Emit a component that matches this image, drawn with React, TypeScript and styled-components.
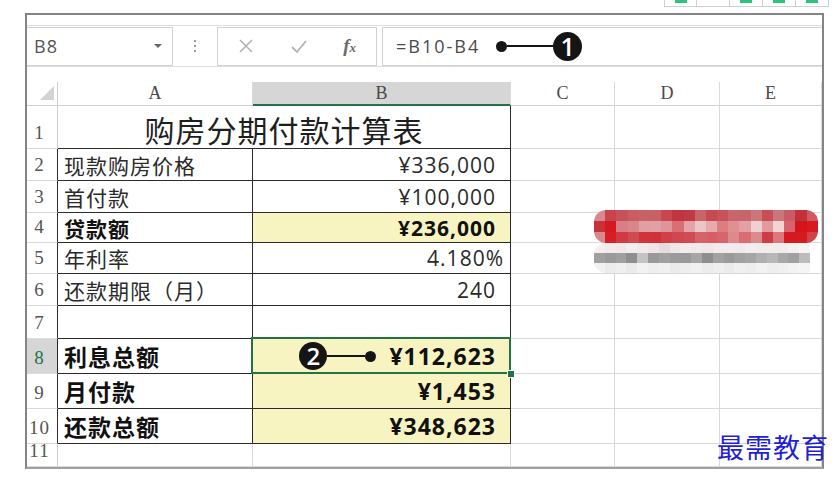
import React from "react";
import styled, { createGlobalStyle, css } from "styled-components";

const GlobalStyle = createGlobalStyle`
  html, body { margin: 0; padding: 0; background: #fff; }
  body { font-family: "Noto Sans CJK SC", "Noto Sans", sans-serif; color: #222; }
  * { box-sizing: border-box; }
`;

const GREEN = "#217346";
const DARK = "#2a2a2a";
const GRID = "#d9d9d9";
const YELLOW = "#f8f4c2";

const Page = styled.div`
  position: relative;
  width: 839px;
  height: 481px;
  overflow: hidden;
  background: #fff;
`;

const TopStrip = styled.div`
  display: flex;
  justify-content: flex-end;
  padding-right: 10px;
  height: 7px;
`;

const StripCell = styled.div<{ $mark?: boolean }>`
  position: relative;
  width: 33px;
  height: 7px;
  border-right: 1px solid #cfcfcf;
  border-bottom: 1px solid #cfcfcf;
  &:first-child { border-left: 1px solid #cfcfcf; }
  ${(p) =>
    p.$mark &&
    css`
      &::after {
        content: "";
        position: absolute;
        left: 10px;
        top: 0;
        width: 12px;
        height: 3px;
        background: #2ec27e;
      }
    `}
`;

const Frame = styled.div`
  margin: 6px 0 0 25px;
  width: 799px;
  border: 2px solid #858585;
  border-bottom-color: #a0a0a0;
  background: #fff;
`;

const FormulaBar = styled.div`
  margin-top: 10px;
  height: 42px;
  display: flex;
  align-items: center;
  border-top: 1px solid #dedede;
  border-bottom: 1px solid #dedede;
`;

const NameBox = styled.div`
  width: 146px;
  height: 39px;
  display: flex;
  align-items: center;
  justify-content: space-between;
  padding: 0 10px 0 7px;
  border: 1px solid #d2d2d2;
  border-left: none;
  font-family: "Open Sans", "Liberation Sans", sans-serif;
  font-size: 18px;
  letter-spacing: 1px;
  color: #555;
`;

const DropArrow = styled.span`
  width: 0;
  height: 0;
  border-left: 4px solid transparent;
  border-right: 4px solid transparent;
  border-top: 4px solid #666;
`;

const Grip = styled.div`
  margin: 0 21px 0 21px;
  display: flex;
  flex-direction: column;
  gap: 3px;
  span {
    width: 2px;
    height: 2px;
    background: #9a9a9a;
  }
`;

const FxBox = styled.div`
  width: 160px;
  height: 39px;
  display: flex;
  align-items: center;
  justify-content: space-between;
  padding: 0 20px 0 20px;
  border: 1px solid #d2d2d2;
  color: #b5b5b5;
`;

const FxLabel = styled.span`
  font-family: "Liberation Serif", serif;
  font-style: italic;
  font-weight: 700;
  font-size: 19px;
  color: #6a6a6a;
  small { font-size: 13px; }
`;

const FormulaInput = styled.div`
  margin-left: 5px;
  flex: 1;
  height: 39px;
  display: flex;
  align-items: center;
  padding-left: 13px;
  border: 1px solid #d2d2d2;
  border-right: none;
  font-family: "Open Sans", "Liberation Sans", sans-serif;
  font-size: 18px;
  letter-spacing: 2px;
  color: #4a4a4a;
`;

const Callout = styled.div<{ $gap: number }>`
  display: flex;
  align-items: center;
  letter-spacing: 0;
  margin-left: ${(p) => p.$gap}px;
  margin-right: ${(p) => (p.$gap === 0 ? 13 : 0)}px;
`;

const Badge = styled.div<{ $size: number }>`
  width: ${(p) => p.$size}px;
  height: ${(p) => p.$size}px;
  border-radius: 50%;
  background: #151515;
  color: #fff;
  display: flex;
  align-items: center;
  justify-content: center;
  font-family: "Open Sans", "Liberation Sans", sans-serif;
  font-size: ${(p) => p.$size - 4}px;
  font-weight: 600;
  line-height: 1;
`;

const Leader = styled.div<{ $w: number }>`
  width: ${(p) => p.$w}px;
  height: 2px;
  background: #151515;
`;

const Dot = styled.div`
  width: 11px;
  height: 11px;
  border-radius: 50%;
  background: #151515;
`;

const Sheet = styled.div<{ $rows: string }>`
  margin-top: 15px;
  display: grid;
  grid-template-columns: 31px 195px 258px 104px 105px 1fr;
  grid-template-rows: ${(p) => p.$rows};
`;

const Corner = styled.div`
  position: relative;
  border-right: 1px solid #cfcfcf;
  border-bottom: 1px solid #cfcfcf;
  &::after {
    content: "";
    position: absolute;
    right: 3px;
    bottom: 5px;
    width: 0;
    height: 0;
    border-left: 14px solid transparent;
    border-bottom: 14px solid #d3d3d3;
  }
`;

const ColHead = styled.div<{ $active?: boolean }>`
  display: flex;
  align-items: center;
  justify-content: center;
  font-family: "Liberation Serif", serif;
  font-size: 18px;
  color: #4a4a4a;
  border-right: 1px solid #dadada;
  border-bottom: 1px solid #cfcfcf;
  ${(p) =>
    p.$active &&
    css`
      background: #d6d6d6;
      border-bottom: 2px solid ${GREEN};
    `}
`;

const RowHead = styled.div<{ $active?: boolean; $edge?: boolean }>`
  display: flex;
  align-items: flex-end;
  justify-content: center;
  padding: 0 5px 3px 0;
  font-family: "Liberation Serif", serif;
  font-size: 19px;
  letter-spacing: 1px;
  line-height: 1.2;
  color: #555;
  border-right: 1px solid ${(p) => (p.$edge ? DARK : "#cfcfcf")};
  border-bottom: 1px solid #dadada;
  ${(p) =>
    p.$active &&
    css`
      background: #d6d6d6;
      color: ${GREEN};
    `}
`;

const Cell = styled.div<{
  $fill?: boolean;
  $darkR?: boolean;
  $darkB?: boolean;
  $right?: boolean;
  $bold?: boolean;
  $size?: number;
  $pad?: number;
  $selected?: boolean;
  $span?: number;
}>`
  position: relative;
  display: flex;
  align-items: center;
  justify-content: ${(p) => (p.$right ? "flex-end" : "flex-start")};
  padding: ${(p) => (p.$right ? `0 ${p.$pad ?? 14}px 0 0` : "0 0 0 6px")};
  grid-column: span ${(p) => p.$span ?? 1};
  background: ${(p) => (p.$fill ? YELLOW : "#fff")};
  border-right: 1px solid ${(p) => (p.$darkR ? DARK : GRID)};
  border-bottom: 1px solid ${(p) => (p.$darkB ? DARK : GRID)};
  font-family: ${(p) =>
    p.$right
      ? `"Open Sans", "Noto Sans CJK SC", sans-serif`
      : `"Noto Sans CJK SC", sans-serif`};
  font-size: ${(p) => p.$size ?? 21}px;
  letter-spacing: 1px;
  font-weight: ${(p) => (p.$bold ? 700 : 400)};
  color: ${(p) => (p.$bold ? "#111" : "#2a2a2a")};
  white-space: nowrap;
  ${(p) =>
    p.$selected &&
    css`
      &::after {
        content: "";
        position: absolute;
        inset: -2px -1px -1px -2px;
        border: 2px solid ${GREEN};
        pointer-events: none;
      }
    `}
`;

const Title = styled(Cell)`
  justify-content: center;
  padding: 4px 0 0 0;
  font-size: 30px;
  letter-spacing: 1px;
  color: #1e1e1e;
`;

const Handle = styled.div`
  position: absolute;
  right: -5px;
  bottom: -5px;
  width: 8px;
  height: 8px;
  background: ${GREEN};
  border: 1px solid #fff;
  z-index: 2;
`;

const Mosaic = styled.div`
  position: absolute;
  left: 594px;
  top: 210px;
  display: flex;
  flex-direction: column;
`;

const MosaicBand = styled.div<{ $cols: number; $w: number; $rowH: number }>`
  display: grid;
  grid-template-columns: repeat(${(p) => p.$cols}, ${(p) => p.$w}px);
  grid-auto-rows: ${(p) => p.$rowH}px;
  border-radius: 12px;
  overflow: hidden;
`;

const Tile = styled.div<{ $c: string }>`
  background: ${(p) => p.$c};
`;

const Watermark = styled.div`
  position: absolute;
  right: 10px;
  top: 431px;
  font-family: "Noto Sans CJK SC", serif;
  font-size: 27px;
  letter-spacing: 1px;
  color: #1f1fd6;
  line-height: 1.2;
`;

const redTiles = [
  ["#d9888e", "#c9434c", "#c85058", "#cc5c63", "#cc6067", "#c96068", "#c84650", "#c1363e", "#bf3a42", "#c8646a", "#c84951", "#c8525a", "#c9656c", "#c9646a", "#cc767b", "#c84f57", "#cb767b", "#c95b62", "#c0313b", "#cd585e"],
  ["#c93139", "#d41a20", "#d97e84", "#d98589", "#e0a0a3", "#e0a1a5", "#e09398", "#d86f75", "#e2a4a7", "#ecc5c7", "#e7abae", "#dc7d82", "#e08f93", "#e39fa2", "#f0cfd0", "#e4999c", "#f2d4d5", "#d9636a", "#d3141b", "#d71a20"],
  ["#d9888e", "#d41f26", "#d03a41", "#d04a51", "#d0343b", "#d03239", "#d04048", "#d0474f", "#d04c53", "#d6626a", "#d65e64", "#d7656c", "#dd8a8e", "#d96d73", "#dd8a8e", "#cf3d44", "#db787e", "#d61920", "#d51a20", "#d24148"],
];

const grayTiles = [
  ["#f4eeee", "#f3eaeb", "#f2e8e9", "#f4eced", "#f2e9ea", "#f0e4e5", "#e6dcdd", "#f0e6e7", "#f4eced", "#f2e9ea", "#efe6e6", "#f3eaeb", "#f3ebec", "#f1e9ea", "#f4eded", "#f2eaeb", "#f3eced", "#f2ebeb", "#f4f0f0", "#f7f4f4"],
  ["#a0a0a0", "#9a9a9a", "#9f9f9f", "#8e8e8e", "#c4c4c4", "#999999", "#a0a0a0", "#9c9c9c", "#9a9a9a", "#a6a6a6", "#8e8e8e", "#a2a2a2", "#9a9a9a", "#a1a1a1", "#a5a5a5", "#b0b0b0", "#b7b7b7", "#a8a8a8", "#a0a0a0", "#bcbcbc"],
  ["#f1f1f1", "#ececec", "#efefef", "#eaeaea", "#f2f2f2", "#eeeeee", "#f0f0f0", "#ebebeb", "#eeeeee", "#f1f1f1", "#ececec", "#efefef", "#ebebeb", "#f0f0f0", "#eeeeee", "#f2f2f2", "#eeeeee", "#f0f0f0", "#f3f3f3", "#f5f5f5"],
];

type Row = {
  n: number;
  h: number;
  label?: string;
  value?: string;
  bold?: boolean;
  fill?: boolean;
  size?: number;
  pad?: number;
};

const rows: Row[] = [
  { n: 1, h: 43 },
  { n: 2, h: 32, label: "现款购房价格", value: "¥336,000" },
  { n: 3, h: 32, label: "首付款", value: "¥100,000" },
  { n: 4, h: 30, label: "贷款额", value: "¥236,000", bold: true, fill: true },
  { n: 5, h: 31, label: "年利率", value: "4.180%", pad: 6 },
  { n: 6, h: 32, label: "还款期限（月）", value: "240" },
  { n: 7, h: 33 },
  { n: 8, h: 35, label: "利息总额", value: "¥112,623", bold: true, fill: true, size: 23 },
  { n: 9, h: 35, label: "月付款", value: "¥1,453", bold: true, fill: true, size: 23 },
  { n: 10, h: 35, label: "还款总额", value: "¥348,623", bold: true, fill: true, size: 23 },
  { n: 11, h: 23 },
];

const columns = ["A", "B", "C", "D", "E"];

export default function App() {
  const template = ["24px", ...rows.map((r) => `${r.h}px`)].join(" ");

  return (
    <Page>
      <GlobalStyle />
      <TopStrip>
        <StripCell $mark />
        <StripCell />
        <StripCell $mark />
        <StripCell $mark />
        <StripCell $mark />
      </TopStrip>

      <Frame>
        <FormulaBar>
          <NameBox>
            B8
            <DropArrow />
          </NameBox>
          <Grip>
            <span />
            <span />
            <span />
          </Grip>
          <FxBox>
            <svg width="16" height="16" viewBox="0 0 16 16">
              <path d="M2 2L14 14M14 2L2 14" stroke="#b3b3b3" strokeWidth="1.6" fill="none" />
            </svg>
            <svg width="18" height="16" viewBox="0 0 18 16">
              <path d="M2 9L7 14L16 3" stroke="#b3b3b3" strokeWidth="1.8" fill="none" />
            </svg>
            <FxLabel>
              f<small>x</small>
            </FxLabel>
          </FxBox>
          <FormulaInput>
            =B10-B4
            <Callout $gap={16}>
              <Dot />
              <Leader $w={46} />
              <Badge $size={29}>1</Badge>
            </Callout>
          </FormulaInput>
        </FormulaBar>

        <Sheet $rows={template}>
          <Corner />
          {columns.map((c) => (
            <ColHead key={c} $active={c === "B"}>
              {c}
            </ColHead>
          ))}

          {rows.map((r) => {
            const edge = r.n >= 2 && r.n <= 10;
            const darkB = r.n === 1 || edge;
            return (
              <React.Fragment key={r.n}>
                <RowHead $active={r.n === 8} $edge={edge}>
                  {r.n}
                </RowHead>
                {r.n === 1 ? (
                  <Title $span={2} $darkB $darkR>
                    购房分期付款计算表
                  </Title>
                ) : (
                  <>
                    <Cell $darkR={edge} $darkB={darkB} $bold={r.bold} $size={r.size}>
                      {r.label}
                    </Cell>
                    <Cell
                      $right
                      $darkR={edge}
                      $darkB={darkB}
                      $bold={r.bold}
                      $fill={r.fill}
                      $size={r.size}
                      $pad={r.pad}
                      $selected={r.n === 8}
                    >
                      {r.n === 8 && (
                        <Callout $gap={0}>
                          <Badge $size={28}>2</Badge>
                          <Leader $w={38} />
                          <Dot />
                        </Callout>
                      )}
                      {r.value}
                      {r.n === 8 && <Handle />}
                    </Cell>
                  </>
                )}
                <Cell />
                <Cell />
                <Cell />
              </React.Fragment>
            );
          })}
        </Sheet>
      </Frame>

      <Mosaic>
        <MosaicBand $cols={20} $w={11.2} $rowH={11}>
          {redTiles.flat().map((c, i) => (
            <Tile key={i} $c={c} />
          ))}
        </MosaicBand>
        <MosaicBand $cols={20} $w={10.8} $rowH={10}>
          {grayTiles.flat().map((c, i) => (
            <Tile key={i} $c={c} />
          ))}
        </MosaicBand>
      </Mosaic>

      <Watermark>最需教育</Watermark>
    </Page>
  );
}
